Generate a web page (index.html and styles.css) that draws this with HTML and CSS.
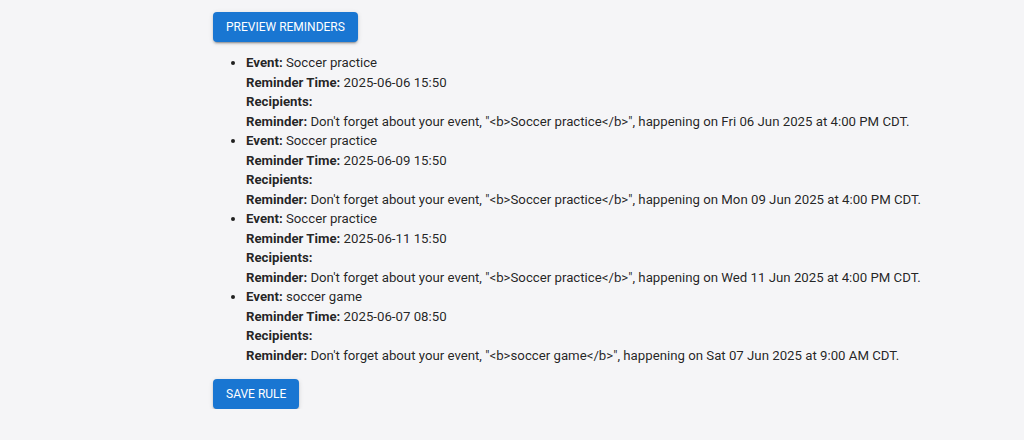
FILE: index.html
```html
<!DOCTYPE html>
<html>
<head>
<meta charset="utf-8">
<link rel="stylesheet" href="styles.css">
</head>
<body>
<div class="page">
  <button class="btn">Preview Reminders</button>
  <ul class="list">
    <li>
      <div><b>Event:</b> Soccer practice</div>
      <div><b>Reminder Time:</b> 2025-06-06 15:50</div>
      <div><b>Recipients:</b> </div>
      <div><b>Reminder:</b> Don't forget about your event, "&lt;b&gt;Soccer practice&lt;/b&gt;", happening on Fri 06 Jun 2025 at 4:00 PM CDT.</div>
    </li>
    <li>
      <div><b>Event:</b> Soccer practice</div>
      <div><b>Reminder Time:</b> 2025-06-09 15:50</div>
      <div><b>Recipients:</b> </div>
      <div><b>Reminder:</b> Don't forget about your event, "&lt;b&gt;Soccer practice&lt;/b&gt;", happening on Mon 09 Jun 2025 at 4:00 PM CDT.</div>
    </li>
    <li>
      <div><b>Event:</b> Soccer practice</div>
      <div><b>Reminder Time:</b> 2025-06-11 15:50</div>
      <div><b>Recipients:</b> </div>
      <div><b>Reminder:</b> Don't forget about your event, "&lt;b&gt;Soccer practice&lt;/b&gt;", happening on Wed 11 Jun 2025 at 4:00 PM CDT.</div>
    </li>
    <li>
      <div><b>Event:</b> soccer game</div>
      <div><b>Reminder Time:</b> 2025-06-07 08:50</div>
      <div><b>Recipients:</b> </div>
      <div><b>Reminder:</b> Don't forget about your event, "&lt;b&gt;soccer game&lt;/b&gt;", happening on Sat 07 Jun 2025 at 9:00 AM CDT.</div>
    </li>
  </ul>
  <button class="btn">Save Rule</button>
</div>
</body>
</html>
```

FILE: styles.css
```css
html, body {
  margin: 0;
  padding: 0;
  background: #f5f5f7;
}
body {
  font-family: Roboto, "Liberation Sans", sans-serif;
  color: rgba(0, 0, 0, 0.87);
}
.page {
  padding: 12px 0 0 213px;
}
.btn {
  display: block;
  font-family: Roboto, sans-serif;
  font-weight: 400;
  font-size: 12px;
  line-height: 22px;
  letter-spacing: 0;
  text-transform: uppercase;
  color: #fff;
  background: #1976d2;
  border: 0;
  border-radius: 4px;
  padding: 4px 13px;
  box-shadow: 0 3px 1px -2px rgba(0,0,0,0.2), 0 2px 2px 0 rgba(0,0,0,0.14), 0 1px 5px 0 rgba(0,0,0,0.12);
}
.list {
  margin: 11px 0 14px 0;
  padding-left: 33px;
  font-size: 13.22px;
  line-height: 19.5px;
}
.list b {
  font-weight: 700;
}
```
